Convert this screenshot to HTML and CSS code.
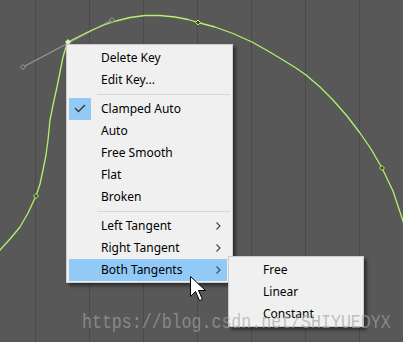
FILE: index.html
```html
<!DOCTYPE html>
<html>
<head>
<meta charset="utf-8">
<link rel="stylesheet" href="styles.css">
</head>
<body>
<div class="editor">
  <svg class="curves" width="403" height="342" viewBox="0 0 403 342">
    <line x1="23" y1="67" x2="112" y2="20" stroke="#9a9a9a" stroke-width="1.2"/>
    <polyline fill="none" stroke="#b2f26c" stroke-width="1.3" stroke-linejoin="round"
      points="-4,254 0,250 10,239 20,227 28,213 36,196 40,184 43,170 46,155 48,140 50,120 53,105 57,87 60,72 63,57 66,47 68,42 80,36 92,30 104,25 116,21 130,17.5 145,15.5 160,15.5 175,17 188,19.5 198,22.5 215,27 233,33.5 252,42 268,51 283,60 296,68 306,75 320,87 333,100 347,116 360,133 371,149 382,168 393,191 403,221 406,232"/>
    <polygon points="23,64.5 25.5,67 23,69.5 20.5,67" fill="#555" stroke="#a0a0a0" stroke-width="1"/>
    <polygon points="112,17.5 114.5,20 112,22.5 109.5,20" fill="#555" stroke="#a0a0a0" stroke-width="1"/>
    <polygon points="68,39.5 70.5,42 68,44.5 65.5,42" fill="#e8f8d8" stroke="#c8f0a0" stroke-width="1"/>
    <polygon points="36,193.5 38.5,196 36,198.5 33.5,196" fill="#3a4a2a" stroke="#b2f26c" stroke-width="1"/>
    <polygon points="198,20 200.5,22.5 198,25 195.5,22.5" fill="#3a4a2a" stroke="#b2f26c" stroke-width="1"/>
    <polygon points="382,165.5 384.5,168 382,170.5 379.5,168" fill="#3a4a2a" stroke="#b2f26c" stroke-width="1"/>
  </svg>

  <div class="menu main-menu">
    <div class="item">Delete Key</div>
    <div class="item">Edit Key...</div>
    <div class="sep"></div>
    <div class="item checked">
      <span class="checkbox">
        <svg width="22" height="22" viewBox="0 0 22 22"><polyline points="6,10 9.5,13.5 16,7" fill="none" stroke="#333" stroke-width="1.3"/></svg>
      </span>Clamped Auto</div>
    <div class="item">Auto</div>
    <div class="item">Free Smooth</div>
    <div class="item">Flat</div>
    <div class="item">Broken</div>
    <div class="sep"></div>
    <div class="item has-sub">Left Tangent<svg class="chev" width="5" height="8" viewBox="0 0 5 8"><polyline points="0.5,0.5 4,4 0.5,7.5" fill="none" stroke="#444" stroke-width="1.1"/></svg></div>
    <div class="item has-sub">Right Tangent<svg class="chev" width="5" height="8" viewBox="0 0 5 8"><polyline points="0.5,0.5 4,4 0.5,7.5" fill="none" stroke="#444" stroke-width="1.1"/></svg></div>
    <div class="item has-sub active">Both Tangents<svg class="chev" width="5" height="8" viewBox="0 0 5 8"><polyline points="0.5,0.5 4,4 0.5,7.5" fill="none" stroke="#444" stroke-width="1.1"/></svg></div>
  </div>

  <div class="menu sub-menu">
    <div class="item">Free</div>
    <div class="item">Linear</div>
    <div class="item">Constant</div>
  </div>

  <svg class="cursor" width="17" height="26" viewBox="0 0 17 26">
    <path d="M0.5,0.5 V20.5 L5.5,15.5 L9.5,24.5 L12.5,23.5 L8.5,14.5 H15.5 Z" fill="#fff" stroke="#000" stroke-width="1" stroke-linejoin="miter"/>
  </svg>

  <div class="watermark">https://blog.csdn.net/SHIYUEDYX</div>
</div>
</body>
</html>
```

FILE: styles.css
```css
html, body {
  margin: 0;
  padding: 0;
  background: #585858;
}

.editor {
  position: relative;
  width: 403px;
  height: 342px;
  overflow: hidden;
  background:
    linear-gradient(to right, #4a4a4a 0 1px, transparent 1px) 35px 0 / 54px 100% repeat-x,
    #585858;
  font-family: "Noto Sans", "Open Sans", sans-serif;
  font-size: 12px;
  color: #000;
}

.curves {
  position: absolute;
  left: 0;
  top: 0;
}

.menu {
  position: absolute;
  box-sizing: border-box;
  background: #f0f0f0;
  border: 1px solid #cccccc;
  box-shadow: 3px 3px 3px rgba(0, 0, 0, 0.45);
  display: flex;
  flex-direction: column;
}

.main-menu {
  left: 66px;
  top: 44px;
  width: 167px;
  height: 239px;
  padding: 2px 0 0 0;
}

.sub-menu {
  left: 228px;
  top: 256px;
  width: 136px;
  height: 71px;
  padding: 2px 0 0 0;
}

.item {
  position: relative;
  display: flex;
  align-items: center;
  height: 22px;
  margin: 0 5px 0 2px;
  padding-left: 32px;
  white-space: nowrap;
  line-height: 22px;
}

.sub-menu .item {
  margin: 0 2px;
  padding-left: 32px;
}

.item.active {
  background: #91c9f7;
}

.checkbox {
  position: absolute;
  left: 0;
  top: 0;
  width: 22px;
  height: 22px;
  background: #91c9f7;
}

.checkbox svg {
  display: block;
}

.chev {
  margin-left: auto;
  margin-right: 6px;
}

.sep {
  height: 7px;
  margin: 0 2px 0 30px;
  background: linear-gradient(#d7d7d7, #d7d7d7) 0 3px / 100% 1px no-repeat;
}

.cursor {
  position: absolute;
  left: 189.5px;
  top: 275.5px;
}

.watermark {
  position: absolute;
  left: 82px;
  top: 311px;
  font-family: "Liberation Mono", monospace;
  font-size: 16.6px;
  line-height: 20px;
  color: rgba(164, 164, 164, 0.66);
  transform: scaleY(1.2);
  transform-origin: 0 0;
  white-space: nowrap;
}
```
